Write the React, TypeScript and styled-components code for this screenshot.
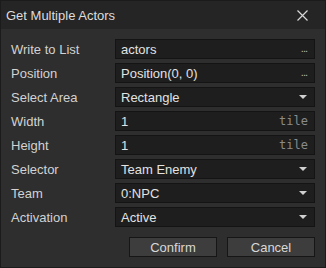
import * as React from 'react'
import styled, { createGlobalStyle } from 'styled-components'

const GlobalStyle = createGlobalStyle`
  html, body {
    margin: 0;
    padding: 0;
    background: #1b1b1b;
  }
  body {
    font-family: 'Liberation Sans', Arial, sans-serif;
    font-size: 13px;
  }
`

type Field =
  | { label: string; kind: 'picker'; value: string }
  | { label: string; kind: 'select'; value: string }
  | { label: string; kind: 'number'; value: string; unit: string }

const fields: Field[] = [
  { label: 'Write to List', kind: 'picker', value: 'actors' },
  { label: 'Position', kind: 'picker', value: 'Position(0, 0)' },
  { label: 'Select Area', kind: 'select', value: 'Rectangle' },
  { label: 'Width', kind: 'number', value: '1', unit: 'tile' },
  { label: 'Height', kind: 'number', value: '1', unit: 'tile' },
  { label: 'Selector', kind: 'select', value: 'Team Enemy' },
  { label: 'Team', kind: 'select', value: '0:NPC' },
  { label: 'Activation', kind: 'select', value: 'Active' }
]

const App: React.FC = () => (
  <React.Fragment>
    <GlobalStyle />
    <Window>
      <TitleBar>
        <Title>Get Multiple Actors</Title>
        <CloseButton aria-label="close">
          <svg width="11" height="11" viewBox="0 0 11 11">
            <path d="M0.5 0.5 L10.5 10.5 M10.5 0.5 L0.5 10.5" stroke="#d8d8d8" strokeWidth="1.2" />
          </svg>
        </CloseButton>
      </TitleBar>
      <Body>
        <Form>
          {fields.map((f) => (
            <React.Fragment key={f.label}>
              <Label>{f.label}</Label>
              <Input>
                <Value>{f.value}</Value>
                {f.kind === 'picker' && <Dots>...</Dots>}
                {f.kind === 'select' && <Caret />}
                {f.kind === 'number' && <Unit>{f.unit}</Unit>}
              </Input>
            </React.Fragment>
          ))}
        </Form>
        <Actions>
          <Button>Confirm</Button>
          <Button>Cancel</Button>
        </Actions>
      </Body>
    </Window>
  </React.Fragment>
)

const Window = styled.div`
  width: 326px;
  height: 268px;
  box-sizing: border-box;
  border: 1px solid #1b1b1b;
  background: #2e2e2e;
  display: flex;
  flex-direction: column;
`

const TitleBar = styled.div`
  height: 28px;
  background: #252525;
  display: flex;
  align-items: center;
  justify-content: space-between;
  padding: 0 0 0 5px;
`

const Title = styled.div`
  color: #dcdcdc;
  font-size: 13px;
  margin-top: 1px;
`

const CloseButton = styled.div`
  width: 28px;
  height: 28px;
  margin-right: 9px;
  display: flex;
  align-items: center;
  justify-content: center;
`

const Body = styled.div`
  flex: 1;
  padding: 10px 10px 0 10px;
  display: flex;
  flex-direction: column;
`

const Form = styled.div`
  display: grid;
  grid-template-columns: 104px 200px;
  grid-auto-rows: 20px;
  row-gap: 4px;
`

const Label = styled.div`
  color: #d2d2d2;
  display: flex;
  align-items: center;
`

const Input = styled.div`
  box-sizing: border-box;
  border: 1px solid #141414;
  background: #1e1e1e;
  display: flex;
  align-items: center;
  padding: 0 6px 0 5px;
`

const Value = styled.span`
  flex: 1;
  color: #e2e2e2;
`

const Dots = styled.span`
  color: #b8b8b8;
  font-size: 11px;
  letter-spacing: -1px;
  margin-top: -3px;
  margin-right: 1px;
`

const Caret = styled.span`
  width: 0;
  height: 0;
  border-left: 4px solid transparent;
  border-right: 4px solid transparent;
  border-top: 4px solid #d0d0d0;
  margin-right: 1px;
`

const Unit = styled.span`
  color: #8a8a8a;
  font-family: 'DejaVu Sans Mono', 'Liberation Mono', monospace;
  font-size: 12px;
`

const Actions = styled.div`
  display: flex;
  justify-content: flex-end;
  gap: 10px;
  margin-top: 10px;
`

const Button = styled.div`
  width: 88px;
  height: 20px;
  box-sizing: border-box;
  border: 1px solid #161616;
  background: #3d3d3d;
  color: #d8d8d8;
  display: flex;
  align-items: center;
  justify-content: center;
`

export default App
